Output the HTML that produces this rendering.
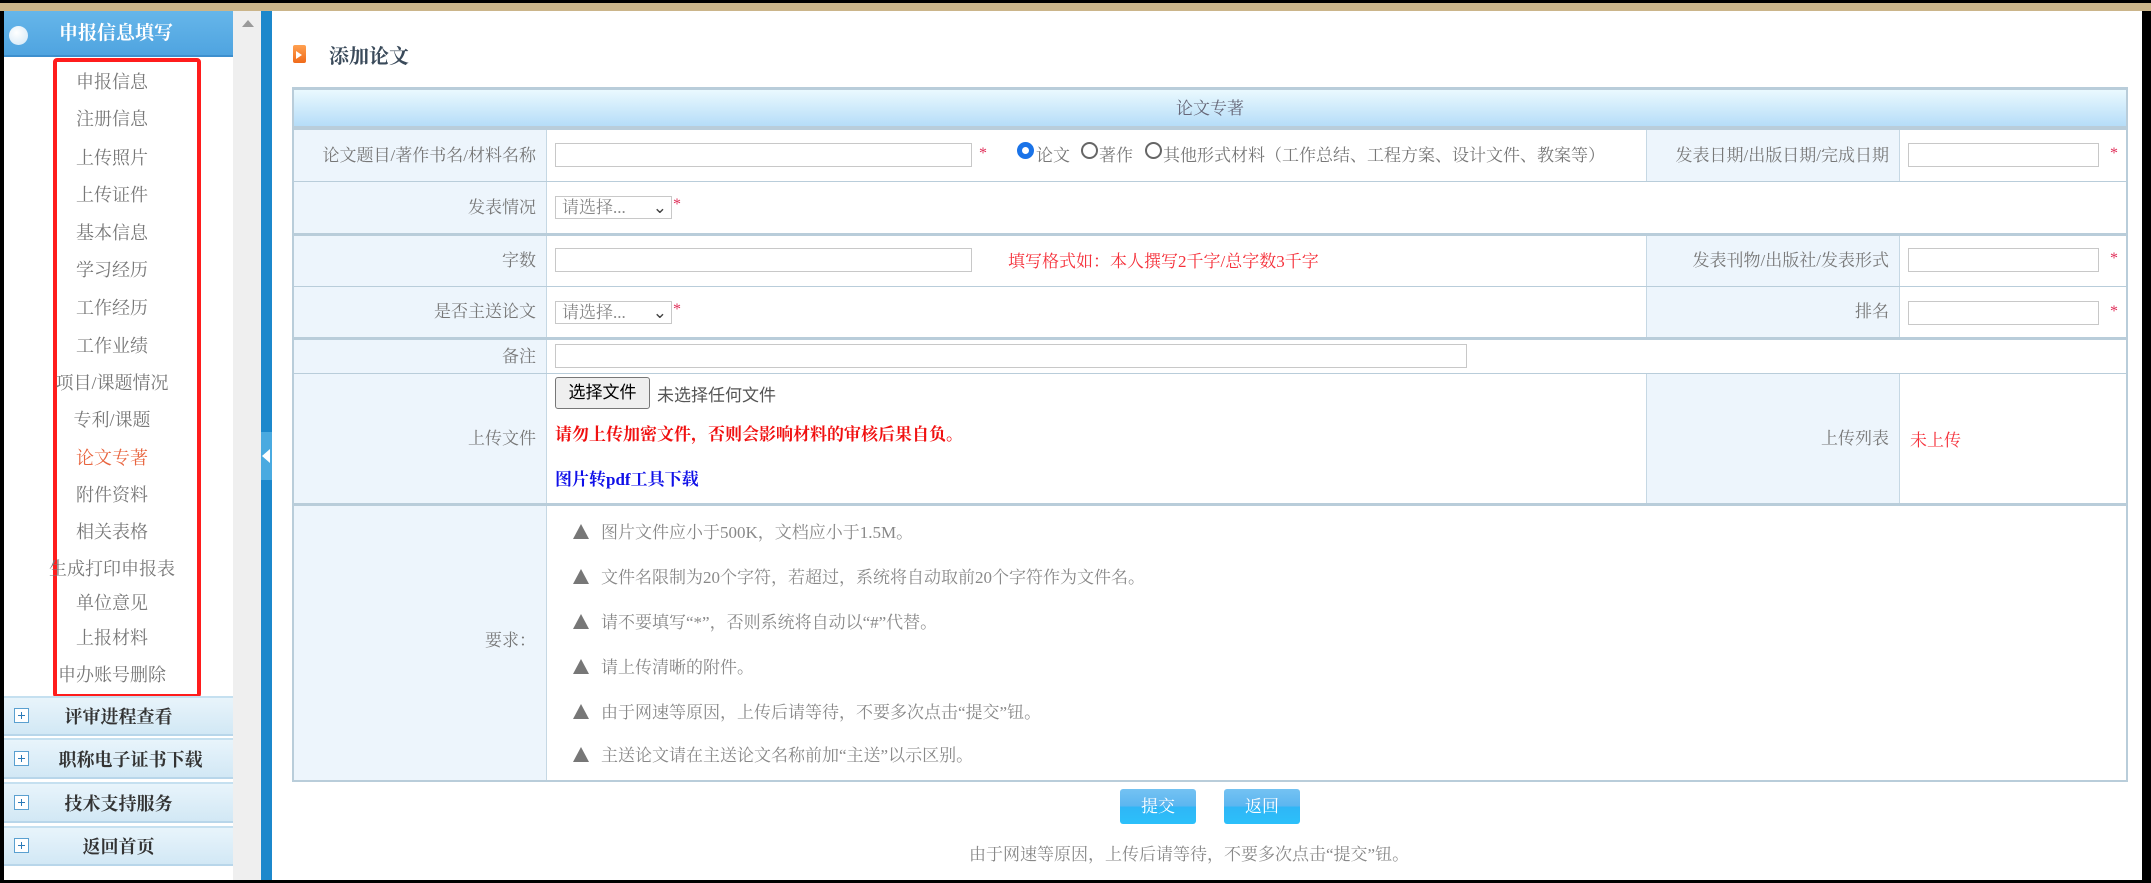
<!DOCTYPE html>
<html><head><meta charset="utf-8"><style>
*{margin:0;padding:0;box-sizing:border-box}
body{width:2151px;height:883px;background:#000;position:relative;overflow:hidden;font-family:"Liberation Serif","Noto Serif CJK SC",serif;font-size:17px;color:#777}
.a{position:absolute;white-space:nowrap}
.mi{position:absolute;left:0;width:224px;text-align:center;font-size:18px;color:#777;line-height:24px}
.cb{position:absolute;left:4px;width:229px;background:linear-gradient(#e8f4fb,#d2e8f5);border-top:2px solid #c5e0f0;border-bottom:2px solid #b8d6ea;font-weight:bold;color:#333;font-size:18px}
.cb .pl{position:absolute;left:10px;top:50%;margin-top:-8px;width:15px;height:15px;border:1px solid #5aa0d0;background:#fff}
.cb .pl:before{content:"";position:absolute;left:3px;top:6px;width:7px;height:1px;background:#2a7ab8}
.cb .pl:after{content:"";position:absolute;left:6px;top:3px;width:1px;height:7px;background:#2a7ab8}
.cb span{position:absolute;left:0;right:0;text-align:center;top:50%;transform:translateY(-50%)}
.hl{position:absolute;left:292px;width:1836px;background:#b9cdda}
.lab{position:absolute;background:#edf5fc;text-align:right;padding-right:10px;color:#777}
.inp{position:absolute;height:24px;border:1px solid #c8c8c8;background:#fff}
.sel{position:absolute;height:23px;border:1px solid #c8c8c8;background:#fff;color:#888;font-size:17px;line-height:21px;padding-left:6px}
.st{position:absolute;color:#e0305a;font-size:16px}
.req{position:absolute;left:573px;color:#888;font-size:17px}
.req b{display:inline-block;width:0;height:0;border-left:8px solid transparent;border-right:8px solid transparent;border-bottom:15px solid #777;margin-right:12px;vertical-align:-1px}
.btn{position:absolute;top:789px;width:76px;height:35px;border-radius:3px;background:linear-gradient(#74c2f2 0%,#5cb6f0 48%,#2fb6f6 52%,#2cc0fa 100%);color:#fff;text-align:center;line-height:35px;font-size:17px}
.rd{position:absolute;width:17px;height:17px;border-radius:50%;border:2px solid #666;background:#fff}
</style></head><body>
<div class="a" style="left:0;top:3px;width:2151px;height:8px;background:#cbb58a"></div>
<div class="a" style="left:4px;top:11px;width:229px;height:869px;background:#fff"></div>
<div class="a" style="left:4px;top:11px;width:229px;height:46px;background:linear-gradient(#66b6ea,#4fa4e0);border-bottom:2px solid #3d8fce"></div>
<div class="a" style="left:9px;top:26px;width:19px;height:19px;border-radius:50%;background:radial-gradient(circle at 40% 35%,#fff,#cfe6f6)"></div>
<div class="a" style="left:59px;top:21px;color:#fff;font-weight:bold;font-size:19px;line-height:26px">申报信息填写</div>
<div class="a" style="left:53px;top:58px;width:148px;height:640px;border:4px solid #ff1c1c;border-radius:4px"></div>
<div class="mi" style="top:70px">申报信息</div>
<div class="mi" style="top:107px">注册信息</div>
<div class="mi" style="top:146px">上传照片</div>
<div class="mi" style="top:183px">上传证件</div>
<div class="mi" style="top:221px">基本信息</div>
<div class="mi" style="top:258px">学习经历</div>
<div class="mi" style="top:296px">工作经历</div>
<div class="mi" style="top:334px">工作业绩</div>
<div class="mi" style="top:371px">项目/课题情况</div>
<div class="mi" style="top:408px">专利/课题</div>
<div class="mi" style="top:446px;color:#e8643e">论文专著</div>
<div class="mi" style="top:483px">附件资料</div>
<div class="mi" style="top:520px">相关表格</div>
<div class="mi" style="top:557px">生成打印申报表</div>
<div class="mi" style="top:591px">单位意见</div>
<div class="mi" style="top:626px">上报材料</div>
<div class="mi" style="top:663px">申办账号删除</div>
<div class="cb" style="top:696px;height:40px"><i class="pl"></i><span>评审进程查看</span></div>
<div class="cb" style="top:738px;height:41px"><i class="pl"></i><span style="left:24px">职称电子证书下载</span></div>
<div class="cb" style="top:782px;height:41px"><i class="pl"></i><span>技术支持服务</span></div>
<div class="cb" style="top:826px;height:40px"><i class="pl"></i><span>返回首页</span></div>
<div class="a" style="left:233px;top:11px;width:28px;height:869px;background:#efefef"></div>
<div class="a" style="left:242px;top:20px;width:0;height:0;border-left:6px solid transparent;border-right:6px solid transparent;border-bottom:7px solid #9a9a9a"></div>
<div class="a" style="left:261px;top:11px;width:11px;height:869px;background:#1c88cc"></div>
<div class="a" style="left:261px;top:432px;width:11px;height:48px;background:#4aaae0"></div>
<div class="a" style="left:262px;top:449px;width:0;height:0;border-top:7px solid transparent;border-bottom:7px solid transparent;border-right:8px solid #fff"></div>
<div class="a" style="left:272px;top:11px;width:1870px;height:869px;background:#fff"></div>
<div class="a" style="left:293px;top:45px;width:13px;height:18px;background:linear-gradient(#ffa050,#f06a1a);border-radius:2px"></div>
<div class="a" style="left:296px;top:51px;width:0;height:0;border-top:4px solid transparent;border-bottom:4px solid transparent;border-left:6px solid #fff"></div>
<div class="a" style="left:329px;top:40px;font-size:20px;font-weight:bold;color:#3a4a5a">添加论文</div>
<div class="a" style="left:292px;top:87px;width:1836px;height:695px;border:2px solid #b9cdda;border-top:3px solid #b9cdda;background:#fff"></div>
<div class="a" style="left:294px;top:90px;width:1832px;height:37px;background:linear-gradient(#eaf9fe,#b4dcf8);text-align:center;line-height:37px;color:#667;font-size:17px">论文专著</div>
<div class="hl" style="top:126px;height:4px"></div>
<div class="lab" style="left:294px;top:130px;width:252px;height:51px;line-height:51px">论文题目/著作书名/材料名称</div>
<div class="lab" style="left:294px;top:182px;width:252px;height:51px;line-height:51px">发表情况</div>
<div class="lab" style="left:294px;top:236px;width:252px;height:50px;line-height:50px">字数</div>
<div class="lab" style="left:294px;top:287px;width:252px;height:50px;line-height:50px">是否主送论文</div>
<div class="lab" style="left:294px;top:340px;width:252px;height:33px;line-height:33px">备注</div>
<div class="lab" style="left:294px;top:374px;width:252px;height:129px;line-height:129px">上传文件</div>
<div class="lab" style="left:294px;top:506px;width:252px;height:274px;padding-top:123px;line-height:24px">要求：</div>
<div class="lab" style="left:1646px;top:130px;width:253px;height:51px;line-height:51px">发表日期/出版日期/完成日期</div>
<div class="lab" style="left:1646px;top:236px;width:253px;height:50px;line-height:50px">发表刊物/出版社/发表形式</div>
<div class="lab" style="left:1646px;top:287px;width:253px;height:50px;line-height:50px">排名</div>
<div class="lab" style="left:1646px;top:374px;width:253px;height:129px;line-height:129px">上传列表</div>
<div class="a" style="left:546px;top:130px;width:1px;height:650px;background:#c6d8e4"></div>
<div class="a" style="left:1646px;top:130px;width:1px;height:51px;background:#c6d8e4"></div>
<div class="a" style="left:1899px;top:130px;width:1px;height:51px;background:#c6d8e4"></div>
<div class="a" style="left:1646px;top:236px;width:1px;height:101px;background:#c6d8e4"></div>
<div class="a" style="left:1899px;top:236px;width:1px;height:101px;background:#c6d8e4"></div>
<div class="a" style="left:1646px;top:374px;width:1px;height:129px;background:#c6d8e4"></div>
<div class="a" style="left:1899px;top:374px;width:1px;height:129px;background:#c6d8e4"></div>
<div class="hl" style="top:181px;height:1px"></div>
<div class="hl" style="top:233px;height:3px"></div>
<div class="hl" style="top:286px;height:1px"></div>
<div class="hl" style="top:337px;height:3px"></div>
<div class="hl" style="top:373px;height:1px"></div>
<div class="hl" style="top:503px;height:3px"></div>
<div class="inp" style="left:555px;top:143px;width:417px"></div>
<div class="st" style="left:979px;top:145px">*</div>
<div class="rd" style="left:1017px;top:142px;border:5px solid #1a73e8"></div>
<div class="a" style="left:1036px;top:141px">论文</div>
<div class="rd" style="left:1081px;top:142px"></div>
<div class="a" style="left:1099px;top:141px">著作</div>
<div class="rd" style="left:1145px;top:142px"></div>
<div class="a" style="left:1163px;top:141px">其他形式材料（工作总结、工程方案、设计文件、教案等）</div>
<div class="inp" style="left:1908px;top:143px;width:191px"></div>
<div class="st" style="left:2110px;top:145px">*</div>
<div class="sel" style="left:555px;top:196px;width:117px">请选择... <span style="position:absolute;right:4px;top:0;color:#444">⌄</span></div>
<div class="st" style="left:673px;top:196px">*</div>
<div class="inp" style="left:555px;top:248px;width:417px"></div>
<div class="a" style="left:1008px;top:247px;color:#f5303a">填写格式如：本人撰写2千字/总字数3千字</div>
<div class="inp" style="left:1908px;top:248px;width:191px"></div>
<div class="st" style="left:2110px;top:250px">*</div>
<div class="sel" style="left:555px;top:301px;width:117px">请选择... <span style="position:absolute;right:4px;top:0;color:#444">⌄</span></div>
<div class="st" style="left:673px;top:301px">*</div>
<div class="inp" style="left:1908px;top:301px;width:191px"></div>
<div class="st" style="left:2110px;top:303px">*</div>
<div class="inp" style="left:555px;top:344px;width:912px"></div>
<div class="a" style="left:555px;top:377px;width:95px;height:32px;border:1px solid #777;border-radius:3px;background:#efefef;color:#000;text-align:center;line-height:30px;font-family:'Liberation Sans','Noto Sans CJK SC',sans-serif;font-size:17px">选择文件</div>
<div class="a" style="left:657px;top:381px;color:#555;font-family:'Liberation Sans','Noto Sans CJK SC',sans-serif">未选择任何文件</div>
<div class="a" style="left:555px;top:420px;color:#f01010;font-weight:bold">请勿上传加密文件，否则会影响材料的审核后果自负。</div>
<div class="a" style="left:555px;top:465px;color:#1010e8;font-weight:bold">图片转pdf工具下载</div>
<div class="a" style="left:1910px;top:426px;color:#f5303a">未上传</div>
<div class="req" style="top:518px"><b></b>图片文件应小于500K，文档应小于1.5M。</div>
<div class="req" style="top:563px"><b></b>文件名限制为20个字符，若超过，系统将自动取前20个字符作为文件名。</div>
<div class="req" style="top:608px"><b></b>请不要填写“*”，否则系统将自动以“#”代替。</div>
<div class="req" style="top:653px"><b></b>请上传清晰的附件。</div>
<div class="req" style="top:698px"><b></b>由于网速等原因，上传后请等待，不要多次点击“提交”钮。</div>
<div class="req" style="top:741px"><b></b>主送论文请在主送论文名称前加“主送”以示区别。</div>
<div class="btn" style="left:1120px">提交</div>
<div class="btn" style="left:1224px">返回</div>
<div class="a" style="left:969px;top:840px;color:#888">由于网速等原因，上传后请等待，不要多次点击“提交”钮。</div>
</body></html>
